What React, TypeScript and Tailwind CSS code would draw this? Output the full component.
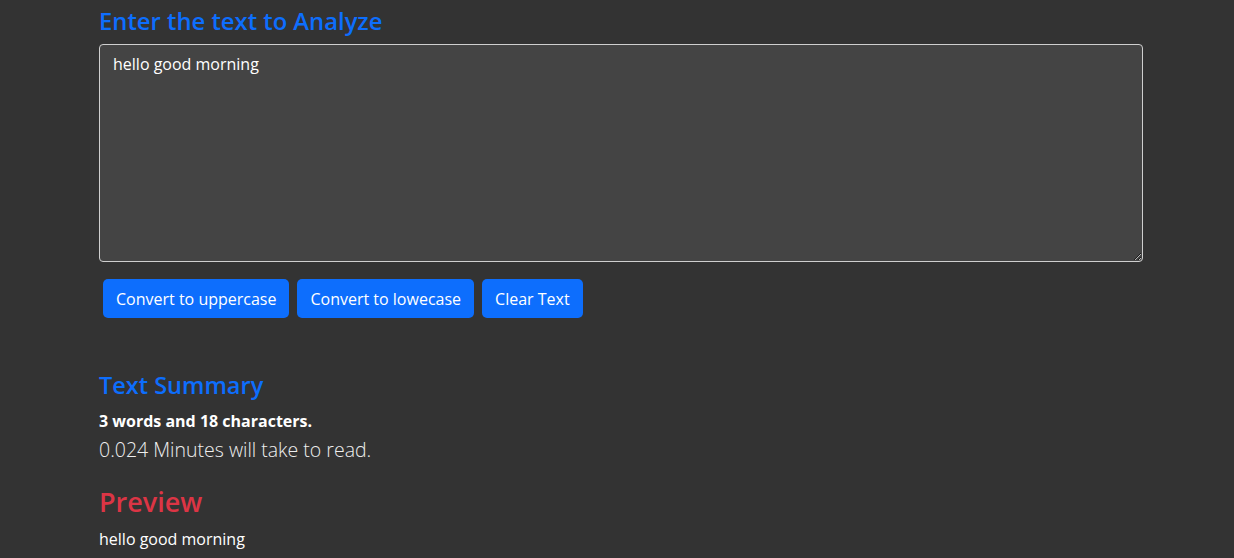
import { useState } from "react";

export default function App() {
  const [text, setText] = useState("hello good morning");
  const words = text.split(/\s+/).filter((w) => w.length > 0).length;

  return (
    <div className="min-h-[558px] bg-[#333333] text-white font-['Open_Sans',sans-serif]">
      <div className="ml-[99px] w-[1044px] pt-[4px]">
        <h1 className="text-[23.8px] font-semibold leading-[34px] text-[#0d6efd] mb-[6px]">
          Enter the text to Analyze
        </h1>
        <textarea
          className="block w-full h-[218px] bg-[#444444] text-white text-[16px] leading-6 px-[13px] py-[7px] border border-[#cfcfcf] rounded-[4px] outline-none"
          value={text}
          onChange={(e) => setText(e.target.value)}
        />
        <div className="flex gap-2 px-1 mt-[17px]">
          <button
            className="h-[39px] px-[13px] rounded-[5px] bg-[#0d6efd] text-white text-[16px]"
            onClick={() => setText(text.toUpperCase())}
          >
            Convert to uppercase
          </button>
          <button
            className="h-[39px] px-[13px] rounded-[5px] bg-[#0d6efd] text-white text-[16px]"
            onClick={() => setText(text.toLowerCase())}
          >
            Convert to lowecase
          </button>
          <button
            className="h-[39px] px-[13px] rounded-[5px] bg-[#0d6efd] text-white text-[16px]"
            onClick={() => setText("")}
          >
            Clear Text
          </button>
        </div>
        <h2 className="mt-[51px] text-[23.5px] font-semibold leading-[32px] text-[#0d6efd]">
          Text Summary
        </h2>
        <p className="mt-[8px] text-[16px] font-bold leading-6">
          {words} words and {text.length} characters.
        </p>
        <p className="mt-[2px] text-[19.5px] font-light leading-[30px] text-[#eeeeee]">
          {(0.008 * words).toFixed(3)} Minutes will take to read.
        </p>
        <h2 className="mt-[18px] text-[27px] font-semibold leading-[38px] text-[#dc3545]">
          Preview
        </h2>
        <p className="mt-[6px] text-[16px] leading-6">{text}</p>
      </div>
    </div>
  );
}
